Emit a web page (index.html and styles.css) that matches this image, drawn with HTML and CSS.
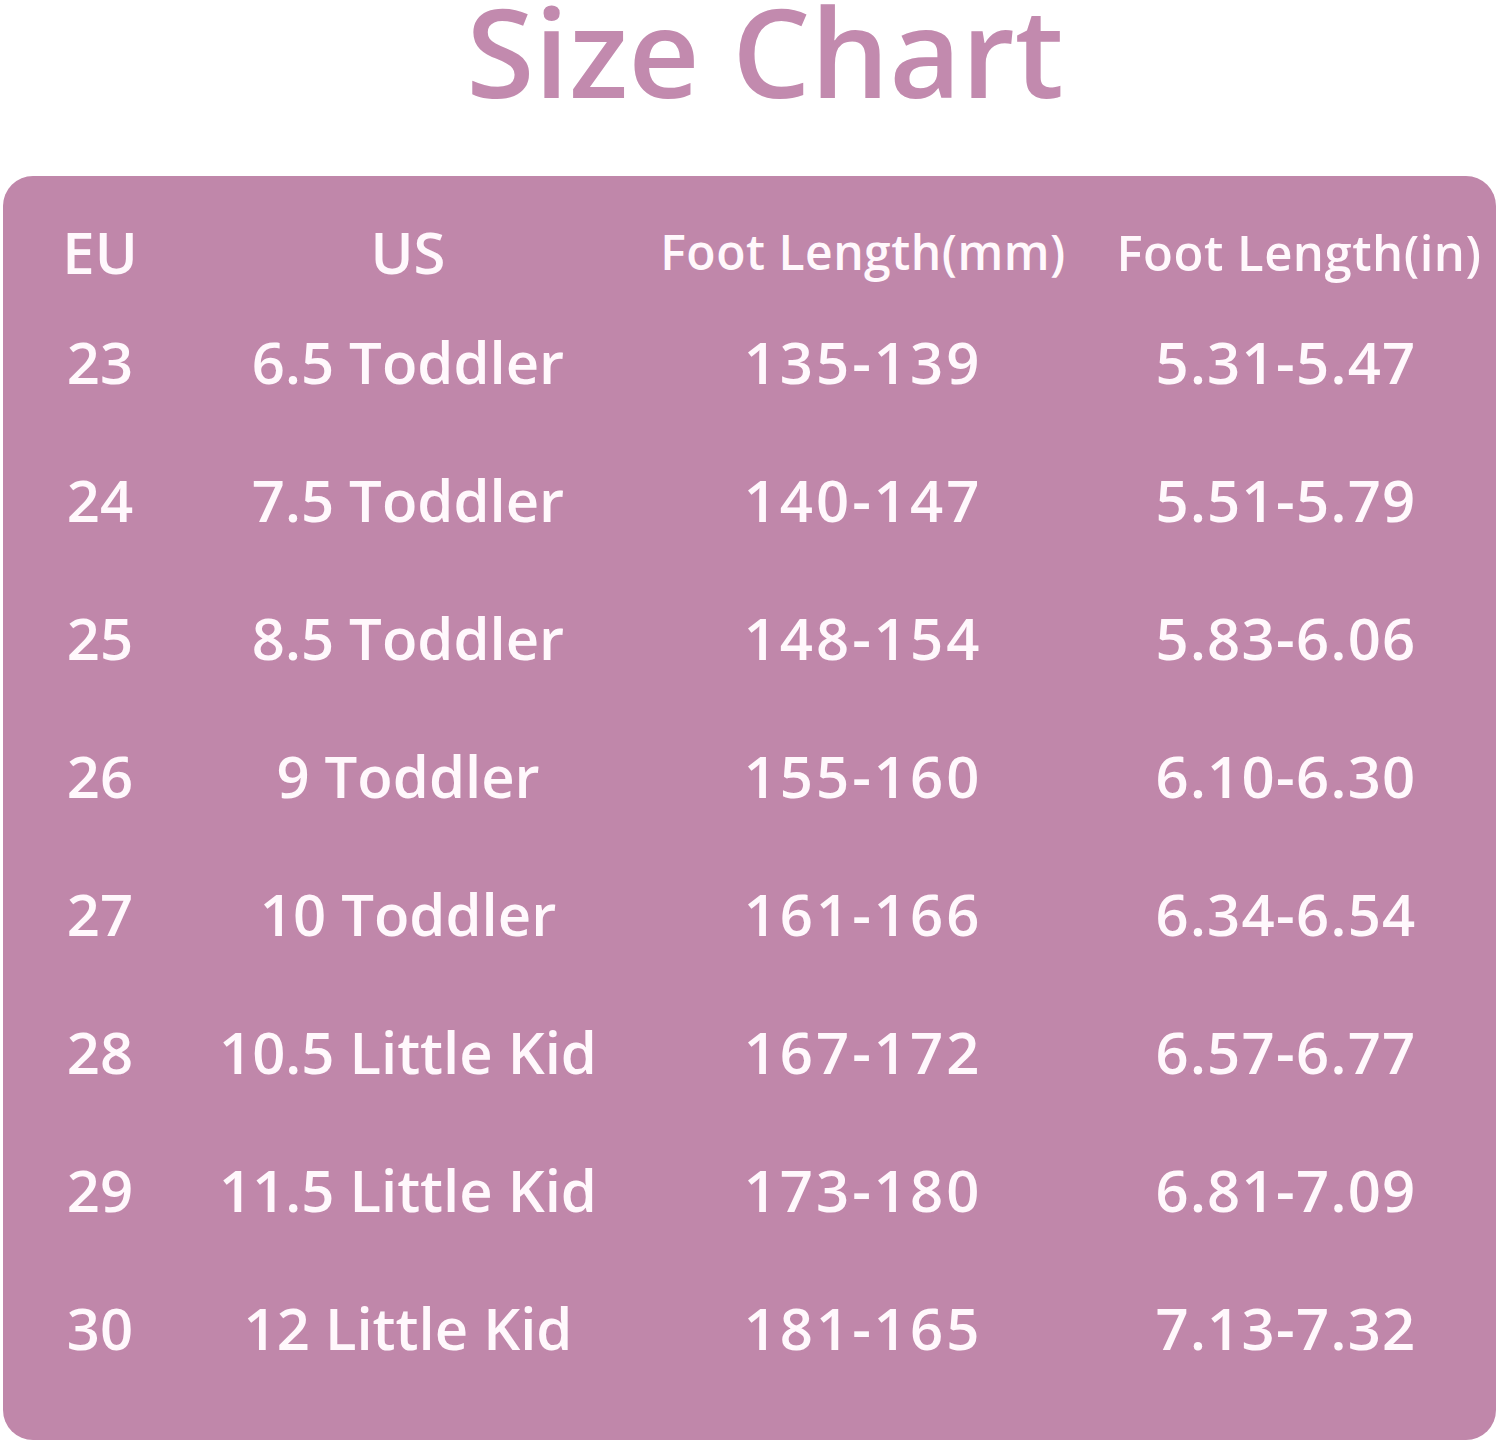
FILE: index.html
```html
<!DOCTYPE html>
<html>
<head>
<meta charset="utf-8">
<link rel="stylesheet" href="styles.css">
</head>
<body>
<h1 class="title">Size Chart</h1>
<div class="card">
  <div class="row head">
    <div class="cell eu">EU</div>
    <div class="cell us">US</div>
    <div class="cell mm small">Foot Length(mm)</div>
    <div class="cell in small">Foot Length(in)</div>
  </div>
  <div class="row"><div class="cell eu">23</div><div class="cell us">6.5 Toddler</div><div class="cell mm num">135-139</div><div class="cell in num">5.31-5.47</div></div>
  <div class="row"><div class="cell eu">24</div><div class="cell us">7.5 Toddler</div><div class="cell mm num">140-147</div><div class="cell in num">5.51-5.79</div></div>
  <div class="row"><div class="cell eu">25</div><div class="cell us">8.5 Toddler</div><div class="cell mm num">148-154</div><div class="cell in num">5.83-6.06</div></div>
  <div class="row"><div class="cell eu">26</div><div class="cell us">9 Toddler</div><div class="cell mm num">155-160</div><div class="cell in num">6.10-6.30</div></div>
  <div class="row"><div class="cell eu">27</div><div class="cell us">10 Toddler</div><div class="cell mm num">161-166</div><div class="cell in num">6.34-6.54</div></div>
  <div class="row"><div class="cell eu">28</div><div class="cell us">10.5 Little Kid</div><div class="cell mm num">167-172</div><div class="cell in num">6.57-6.77</div></div>
  <div class="row"><div class="cell eu">29</div><div class="cell us">11.5 Little Kid</div><div class="cell mm num">173-180</div><div class="cell in num">6.81-7.09</div></div>
  <div class="row"><div class="cell eu">30</div><div class="cell us">12 Little Kid</div><div class="cell mm num">181-165</div><div class="cell in num">7.13-7.32</div></div>
</div>
</body>
</html>
```
FILE: styles.css
```css
html, body {
  margin: 0;
  padding: 0;
  background: #ffffff;
}
body {
  width: 1500px;
  height: 1444px;
  font-family: "Open Sans", "Noto Sans", sans-serif;
  overflow: hidden;
}
.title {
  margin: 0;
  height: 176px;
  text-align: center;
  font-size: 124px;
  font-weight: 600;
  line-height: 100px;
  color: #c28aae;
  padding-left: 30px;
  box-sizing: border-box;
}
.card {
  margin-left: 3px;
  width: 1493px;
  height: 1264px;
  box-sizing: border-box;
  background: #c087aa;
  border-radius: 30px;
  padding-top: 35px;
  color: #fff8fc;
}
.row {
  display: grid;
  grid-template-columns: 194px 422px 488px 376px;
  height: 138px;
  align-items: center;
}
.row.head {
  height: 82px;
}
.cell {
  text-align: center;
  white-space: nowrap;
  font-size: 58px;
  font-weight: 600;
  line-height: 1;
}
.cell.small {
  font-size: 48px;
  letter-spacing: 0.5px;
}
.head .cell.in {
  font-size: 49px;
  padding-left: 8px;
}
.cell.num.mm {
  letter-spacing: 3px;
}
.cell.num.in {
  letter-spacing: 1.3px;
}
.row:not(.head) .in {
  padding-right: 18px;
}
```
